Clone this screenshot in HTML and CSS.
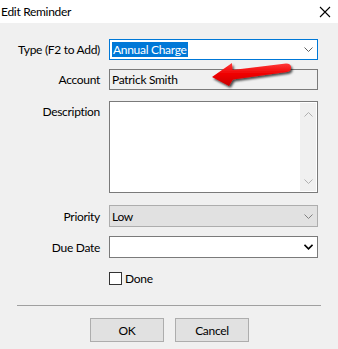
FILE: index.html
```html
<!DOCTYPE html>
<html lang="en">
<head>
    <meta charset="UTF-8">
    <meta name="viewport" content="width=device-width, initial-scale=1.0">
    <title>Edit Reminder</title>
    <link rel="stylesheet" href="styles.css">
</head>
<body>
    <div class="titlebar">
        <span class="title">Edit Reminder</span>
        <svg class="close" width="12" height="12" viewBox="0 0 12 12">
            <path d="M1 1 L11 11 M11 1 L1 11" stroke="#000" stroke-width="1.1" fill="none"/>
        </svg>
    </div>

    <div class="form">
        <div class="row row-type">
            <label>Type (F2 to Add)</label>
            <div class="field combo focused">
                <span class="selected">Annual Charge</span>
                <svg class="chev" width="9" height="5" viewBox="0 0 9 5"><path d="M0.5 0.5 L4.5 4.5 L8.5 0.5" stroke="#606060" fill="none"/></svg>
            </div>
        </div>

        <div class="row row-account">
            <label>Account</label>
            <div class="field readonly">Patrick Smith</div>
        </div>

        <div class="row row-desc">
            <label class="top">Description</label>
            <div class="field memo">
                <div class="memo-text"></div>
                <div class="scrollbar">
                    <svg width="9" height="5" viewBox="0 0 9 5"><path d="M0.5 4.5 L4.5 0.5 L8.5 4.5" stroke="#b0b0b0" fill="none"/></svg>
                    <svg width="9" height="5" viewBox="0 0 9 5"><path d="M0.5 0.5 L4.5 4.5 L8.5 0.5" stroke="#b0b0b0" fill="none"/></svg>
                </div>
            </div>
        </div>

        <div class="row row-priority">
            <label>Priority</label>
            <div class="field combo disabled">
                <span>Low</span>
                <svg class="chev" width="9" height="5" viewBox="0 0 9 5"><path d="M0.5 0.5 L4.5 4.5 L8.5 0.5" stroke="#808080" fill="none"/></svg>
            </div>
        </div>

        <div class="row row-date">
            <label>Due Date</label>
            <div class="field combo">
                <span></span>
                <svg class="chev" width="9" height="6" viewBox="0 0 9 6"><path d="M0.5 0.8 L4.5 4.8 L8.5 0.8" stroke="#000" stroke-width="1.6" fill="none"/></svg>
            </div>
        </div>

        <div class="row row-done">
            <span></span>
            <div class="check">
                <span class="box"></span>
                <span>Done</span>
            </div>
        </div>
    </div>

    <div class="separator"></div>

    <div class="buttons">
        <button>OK</button>
        <button>Cancel</button>
    </div>

    <!-- red arrow pointing at the account field -->
    <svg class="arrow" width="338" height="349" viewBox="0 0 338 349">
        <defs>
            <linearGradient id="red" x1="0" y1="0" x2="0" y2="1">
                <stop offset="0" stop-color="#ff3a3a"/>
                <stop offset="0.5" stop-color="#ee0000"/>
                <stop offset="1" stop-color="#c80000"/>
            </linearGradient>
            <filter id="shadow" x="-20%" y="-40%" width="140%" height="180%">
                <feDropShadow dx="1.5" dy="2" stdDeviation="1.3" flood-color="#000" flood-opacity="0.7"/>
            </filter>
        </defs>
        <path d="M212 77 L232 63 L232.5 70 L286 63.5 Q291 63.5 291 67.5 Q291 71.5 286.5 72 L233 79.5 L229 86 Z"
              fill="url(#red)" filter="url(#shadow)"/>
    </svg>
</body>
</html>
```

FILE: styles.css
```css
body {
    margin: 0;
    width: 338px;
    height: 349px;
    background-color: #f0f0f0;
    font-family: Lato, "Noto Sans", sans-serif;
    font-size: 12px;
    letter-spacing: -0.3px;
    color: #000;
    position: relative;
    overflow: hidden;
}
.titlebar {
    height: 23px;
    background: #ffffff;
    display: flex;
    align-items: center;
    justify-content: space-between;
    padding: 0 7px 0 1px;
}
.title {
    line-height: 23px;
}
.form {
    padding-top: 16px;
}
.row {
    display: grid;
    grid-template-columns: 100px 209px;
    column-gap: 9px;
    align-items: center;
}
.row label {
    text-align: right;
}
.row label.top {
    align-self: start;
    padding-top: 3px;
}
.field {
    box-sizing: border-box;
    border: 1px solid #7a7a7a;
    background: #ffffff;
    padding: 0 2px;
    display: flex;
    align-items: center;
}
.combo {
    justify-content: space-between;
    padding-right: 4px;
}
.focused {
    border-color: #0078d7;
}
.selected {
    background: #0078d7;
    color: #ffffff;
    padding: 0 1px;
    line-height: 15px;
}
.readonly {
    background: #f0f0f0;
}
.disabled {
    background: #e1e1e1;
    border-color: #adadad;
}
.row-type .field { height: 21px; }
.row-type { margin-bottom: 9px; }
.row-account .field { height: 21px; }
.row-account { margin-bottom: 11px; }
.row-desc .field { height: 92px; }
.row-desc { margin-bottom: 12px; }
.row-priority .field { height: 22px; }
.row-priority { margin-bottom: 9px; }
.row-date .field { height: 22px; }
.row-date { margin-bottom: 13px; }
.memo {
    align-items: stretch;
    padding: 0;
}
.memo-text {
    flex: 1;
}
.scrollbar {
    width: 16px;
    margin: 1px 1px 1px 0;
    background: #f0f0f0;
    display: flex;
    flex-direction: column;
    justify-content: space-between;
    align-items: center;
    padding: 9px 0 7px;
}
.check {
    display: flex;
    align-items: center;
    gap: 3px;
    height: 14px;
}
.box {
    box-sizing: border-box;
    width: 13px;
    height: 13px;
    border: 1px solid #333333;
    background: #ffffff;
}
.separator {
    margin: 20px 0 0 17px;
    width: 304px;
    height: 1px;
    background: #a0a0a0;
}
.buttons {
    display: flex;
    justify-content: center;
    gap: 11px;
    margin-top: 12px;
    padding-left: 1px;
}
button {
    width: 74px;
    height: 24px;
    background-color: #e1e1e1;
    border: 1px solid #adadad;
    font-family: inherit;
    font-size: 12px;
    letter-spacing: inherit;
    color: #000;
    padding: 0;
}
.arrow {
    position: absolute;
    left: 0;
    top: 0;
    pointer-events: none;
}
```
